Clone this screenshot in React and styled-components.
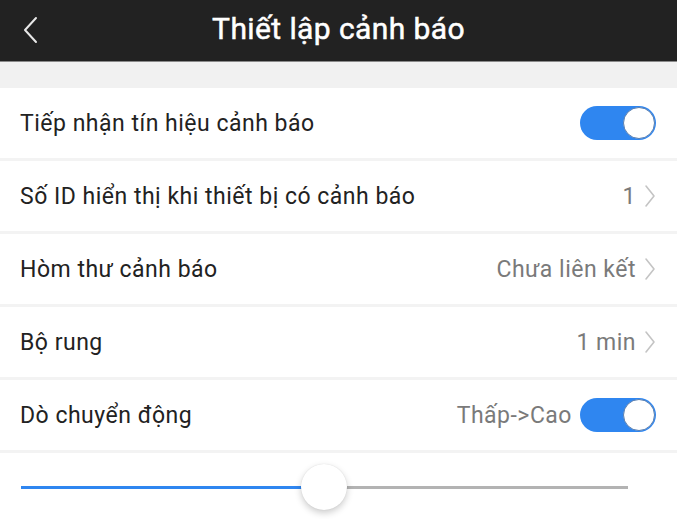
import React from "react";
import styled, { createGlobalStyle } from "styled-components";

const Global = createGlobalStyle`
  html, body { margin: 0; padding: 0; background: #ffffff; }
  body { font-family: "Roboto", "Liberation Sans", Arial, sans-serif; }
  * { box-sizing: border-box; }
`;

const Page = styled.div`
  width: 677px;
  height: 519px;
  overflow: hidden;
  background: #fff;
  display: flex;
  flex-direction: column;
`;

const Header = styled.header`
  height: 62px;
  background: #222222;
  border-bottom: 1px solid #8a8a8a;
  display: grid;
  grid-template-columns: 60px 1fr 60px;
  align-items: center;
  flex-shrink: 0;
`;

const BackButton = styled.div`
  display: flex;
  align-items: center;
  justify-content: center;
  padding-left: 2px;
  padding-bottom: 2px;
`;

const Title = styled.h1`
  margin: 0 0 4px;
  text-align: center;
  color: #ffffff;
  font-size: 30px;
  font-weight: 400;
  font-family: "Roboto", "Liberation Sans", sans-serif;
  letter-spacing: 0.4px;
  -webkit-text-stroke: 0.5px #ffffff;
`;

const Band = styled.div`
  height: 26px;
  background: #f1f1f1;
  flex-shrink: 0;
`;

const List = styled.div`
  display: flex;
  flex-direction: column;
`;

const Row = styled.div`
  height: 73px;
  padding: 0 21px 0 20px;
  border-bottom: 3px solid #f3f3f3;
  display: flex;
  align-items: center;
  justify-content: space-between;
  flex-shrink: 0;
`;

const Label = styled.span`
  font-size: 23px;
  letter-spacing: 0.5px;
  color: #222;
`;

const Right = styled.div`
  display: flex;
  align-items: center;
  gap: 8px;
`;

const Value = styled.span`
  font-size: 23px;
  letter-spacing: 0.5px;
  color: #7a7a7a;
`;

const Toggle = styled.div`
  width: 76px;
  height: 34px;
  border-radius: 17px;
  background: #2f86f0;
  position: relative;
  flex-shrink: 0;
`;

const Knob = styled.div`
  position: absolute;
  right: 1px;
  top: 1px;
  width: 32px;
  height: 32px;
  border-radius: 50%;
  background: #fff;
  border: 1px solid #5a7fb0;
`;

const SliderArea = styled.div`
  flex: 1;
  padding: 2px 49px 0 21px;
  display: flex;
  align-items: center;
`;

const Track = styled.div`
  position: relative;
  flex: 1;
  height: 3px;
  background: #b3b3b3;
`;

const Fill = styled.div`
  position: absolute;
  left: 0;
  top: 0;
  height: 3px;
  background: #2f86f0;
`;

const Thumb = styled.div`
  position: absolute;
  top: 50%;
  width: 46px;
  height: 46px;
  margin-left: -23px;
  margin-top: -23px;
  border-radius: 50%;
  background: #fff;
  box-shadow: 0 3px 7px rgba(0, 0, 0, 0.2), 0 0 1px rgba(0, 0, 0, 0.15);
`;

const Chevron = () => (
  <svg width="12" height="24" viewBox="0 0 12 24" fill="none">
    <path d="M2 2 L10 12 L2 22" stroke="#c4c4c4" strokeWidth="1.6" strokeLinejoin="round" strokeLinecap="round" />
  </svg>
);

const BackIcon = () => (
  <svg width="16" height="28" viewBox="0 0 16 28" fill="none">
    <path d="M13 2 L2 14 L13 26" stroke="#e8e8e8" strokeWidth="2" strokeLinejoin="round" strokeLinecap="round" />
  </svg>
);

const Switch = () => (
  <Toggle>
    <Knob />
  </Toggle>
);

export default function App() {
  const pct = 303 / 607;
  return (
    <Page>
      <Global />
      <Header>
        <BackButton>
          <BackIcon />
        </BackButton>
        <Title>Thiết lập cảnh báo</Title>
        <span />
      </Header>
      <Band />
      <List>
        <Row>
          <Label>Tiếp nhận tín hiệu cảnh báo</Label>
          <Switch />
        </Row>
        <Row>
          <Label>Số ID hiển thị khi thiết bị có cảnh báo</Label>
          <Right>
            <Value>1</Value>
            <Chevron />
          </Right>
        </Row>
        <Row>
          <Label>Hòm thư cảnh báo</Label>
          <Right>
            <Value>Chưa liên kết</Value>
            <Chevron />
          </Right>
        </Row>
        <Row>
          <Label>Bộ rung</Label>
          <Right>
            <Value>1 min</Value>
            <Chevron />
          </Right>
        </Row>
        <Row>
          <Label>Dò chuyển động</Label>
          <Right>
            <Value>Thấp-&gt;Cao</Value>
            <Switch />
          </Right>
        </Row>
      </List>
      <SliderArea>
        <Track>
          <Fill style={{ width: `${pct * 100}%` }} />
          <Thumb style={{ left: `${pct * 100}%` }} />
        </Track>
      </SliderArea>
    </Page>
  );
}
